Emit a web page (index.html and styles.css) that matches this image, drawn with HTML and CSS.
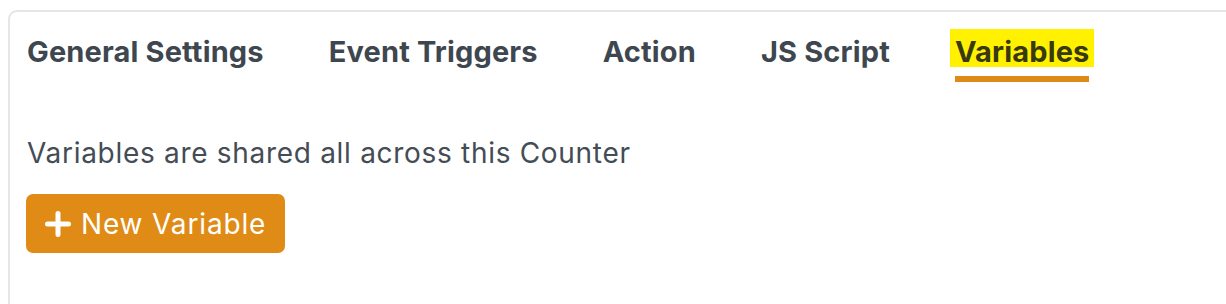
FILE: index.html
```html
<!DOCTYPE html>
<html>
<head>
<meta charset="utf-8">
<link rel="stylesheet" href="styles.css">
</head>
<body>
<div class="card">
  <nav class="tabs">
    <span class="tab">General Settings</span>
    <span class="tab">Event Triggers</span>
    <span class="tab">Action</span>
    <span class="tab">JS Script</span>
    <span class="tab active"><mark class="hl">Variables</mark></span>
  </nav>
  <div class="panel">
    <p class="desc">Variables are shared all across this Counter</p>
    <button class="btn">
      <svg class="plus" width="28" height="28" viewBox="0 0 28 28"><path d="M14 3.5V24.5M3.5 14H24.5" stroke="#fff" stroke-width="5" stroke-linecap="round" fill="none"/></svg>
      <span>New Variable</span>
    </button>
  </div>
</div>
</body>
</html>
```

FILE: styles.css
```css
html, body {
  margin: 0;
  padding: 0;
  background: #ffffff;
  overflow: hidden;
}
body {
  width: 1226px;
  height: 304px;
  font-family: "Inter", "Liberation Sans", sans-serif;
  color: #414a53;
}
.card {
  margin: 10px -20px 0 8px;
  height: 300px;
  border: 2px solid #e6e6e6;
  border-radius: 9px;
  padding: 0 0 0 17px;
}
.tabs {
  display: flex;
  gap: 65px;
  padding-top: 21px;
}
.tab {
  position: relative;
  font-size: 29px;
  font-weight: 700;
  letter-spacing: 0.15px;
  line-height: 38px;
  padding-bottom: 11px;
  color: #3e4750;
}
.tab.active::after {
  content: "";
  position: absolute;
  left: 0;
  right: 0;
  bottom: 0;
  height: 6px;
  background: #de8a16;
}
.hl {
  display: inline-block;
  background: #fff100;
  color: #38390f;
  line-height: 30px;
  padding: 8px 5px 0;
  margin: -8px -5px 0;
}
.panel {
  padding-top: 54px;
}
.desc {
  margin: 0;
  font-size: 28px;
  letter-spacing: 0.7px;
  line-height: 34px;
  color: #444c55;
}
.btn {
  margin: 24px 0 0 -1px;
  display: flex;
  align-items: center;
  gap: 9px;
  height: 59px;
  padding: 0 19px 0 18px;
  background: #df8b15;
  border: none;
  border-radius: 7px;
  color: #ffffff;
  font-family: "Inter", "Liberation Sans", sans-serif;
  font-size: 28px;
  letter-spacing: 0.85px;
  line-height: 34px;
}
.plus { display: block; }
```
